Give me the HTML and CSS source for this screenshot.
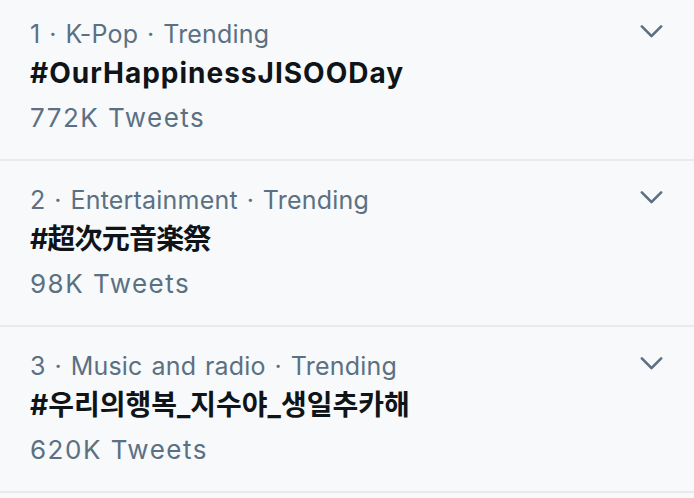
FILE: index.html
```html
<!DOCTYPE html>
<html lang="en">
<head>
<meta charset="utf-8">
<title>Trends</title>
<link rel="stylesheet" href="styles.css">
</head>
<body>
<div class="trends">
  <div class="trend">
    <div class="trend-body">
      <div class="meta">1 · K-Pop · Trending</div>
      <div class="title">#OurHappinessJISOODay</div>
      <div class="count">772K Tweets</div>
    </div>
    <svg class="chevron" viewBox="0 0 24 24" aria-hidden="true"><path d="M20.207 8.147c-.39-.39-1.023-.39-1.414 0L12 14.94 5.207 8.147c-.39-.39-1.023-.39-1.414 0-.39.39-.39 1.023 0 1.414l7.5 7.5c.195.196.45.294.707.294s.512-.098.707-.293l7.5-7.5c.39-.39.39-1.03 0-1.42z"/></svg>
  </div>
  <div class="trend">
    <div class="trend-body">
      <div class="meta">2 · Entertainment · Trending</div>
      <div class="title" lang="ja">#超次元音楽祭</div>
      <div class="count">98K Tweets</div>
    </div>
    <svg class="chevron" viewBox="0 0 24 24" aria-hidden="true"><path d="M20.207 8.147c-.39-.39-1.023-.39-1.414 0L12 14.94 5.207 8.147c-.39-.39-1.023-.39-1.414 0-.39.39-.39 1.023 0 1.414l7.5 7.5c.195.196.45.294.707.294s.512-.098.707-.293l7.5-7.5c.39-.39.39-1.03 0-1.42z"/></svg>
  </div>
  <div class="trend">
    <div class="trend-body">
      <div class="meta">3 · Music and radio · Trending</div>
      <div class="title" lang="ko">#우리의행복_지수야_생일추카해</div>
      <div class="count">620K Tweets</div>
    </div>
    <svg class="chevron" viewBox="0 0 24 24" aria-hidden="true"><path d="M20.207 8.147c-.39-.39-1.023-.39-1.414 0L12 14.94 5.207 8.147c-.39-.39-1.023-.39-1.414 0-.39.39-.39 1.023 0 1.414l7.5 7.5c.195.196.45.294.707.294s.512-.098.707-.293l7.5-7.5c.39-.39.39-1.03 0-1.42z"/></svg>
  </div>
</div>
</body>
</html>
```
FILE: styles.css
```css
html, body {
  margin: 0;
  padding: 0;
  background: #f7f9fa;
}

body {
  font-family: Inter, "Noto Sans", "Noto Sans CJK JP", sans-serif;
  overflow: hidden;
}

.trends {
  margin-top: -5px;
}

.trend {
  display: flex;
  align-items: flex-start;
  height: 164px;
  box-sizing: content-box;
  padding: 0 27px 0 30px;
  border-bottom: 2px solid #e6ebee;
}

.trend-body {
  flex: 1;
  padding-top: 24px;
}

.meta {
  font-size: 25px;
  line-height: 30px;
  letter-spacing: 0.2px;
  word-spacing: 1.6px;
  color: #5b7083;
}

.title {
  margin-top: 6px;
  font-size: 28px;
  line-height: 36px;
  font-weight: 700;
  letter-spacing: 1px;
  color: #0f1419;
}

.title:lang(ja) {
  font-family: Inter, "Noto Sans CJK JP", sans-serif;
  letter-spacing: -0.8px;
}

.title:lang(ko) {
  font-family: Inter, "Noto Sans CJK KR", sans-serif;
  letter-spacing: 0;
}

.count {
  margin-top: 9px;
  font-size: 26px;
  line-height: 36px;
  letter-spacing: 1.5px;
  color: #5b7083;
}

.chevron {
  width: 31px;
  height: 31px;
  margin-top: 20px;
  fill: #5b7083;
  flex: none;
}
```
